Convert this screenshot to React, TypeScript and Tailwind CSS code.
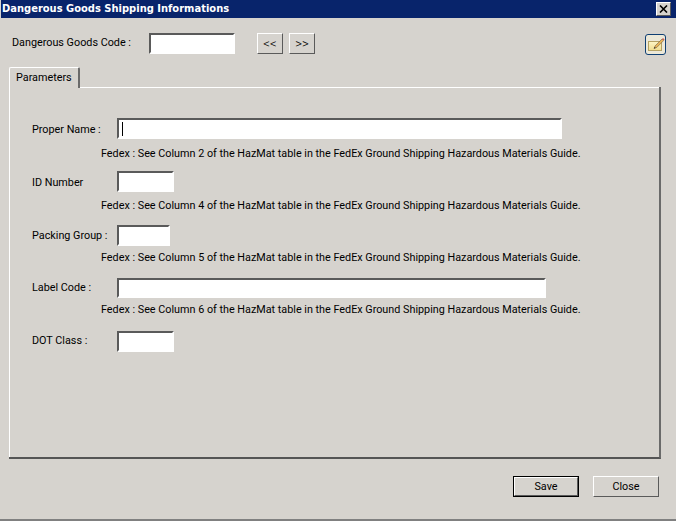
const inset = "bg-white border-2 border-t-[#5a5a5a] border-l-[#5a5a5a] border-r-white border-b-white";
const raised = "flex items-center justify-center bg-[#d6d3ce] border border-t-white border-l-white border-r-[#5a5a5a] border-b-[#5a5a5a]";

const Field = ({ label, labelPad, width, hint, hintGap, height, cursor }: { label: string; labelPad?: string; width: string; hint?: number; hintGap?: string; height?: string; cursor?: boolean }) => (
  <div>
    <div className="flex items-center">
      <span className={`w-[85px] whitespace-nowrap ${labelPad ?? "pt-px"}`}>{label}</span>
      <div className={`${inset} ${height ?? "h-[21px]"} ${width} flex items-center pl-[2px]`}>
        {cursor && <div className="ml-px w-px h-[14px] bg-black" />}
      </div>
    </div>
    {hint && (
      <p className={`${hintGap ?? "mt-[7px]"} ml-[69px] h-[14px] leading-[16px] whitespace-nowrap`}>
        Fedex : See Column {hint} of the HazMat table in the FedEx Ground Shipping Hazardous Materials Guide.
      </p>
    )}
  </div>
);

const App = () => {
  return (
    <div
      className="w-[676px] h-[521px] overflow-hidden flex flex-col bg-[#d6d3ce] text-[10.8px] text-black border-b-2 border-b-[#808080]"
      style={{ fontFamily: 'Roboto, sans-serif' }}
    >
      {/* Title bar */}
      <div className="ml-px h-[18px] shrink-0 bg-[#08246b] flex items-center justify-between pl-px pr-[5px]">
        <span className="text-white font-bold text-[9.95px] whitespace-nowrap" style={{ fontFamily: '"DejaVu Sans", sans-serif' }}>
          Dangerous Goods Shipping Informations
        </span>
        <button className={`${raised} w-[15px] h-[14px]`}>
          <svg width="9" height="8" viewBox="0 0 9 8">
            <path d="M1 0.5 L8 7.5 M8 0.5 L1 7.5" stroke="#000" strokeWidth="1.6" />
          </svg>
        </button>
      </div>

      {/* Code row */}
      <div className="flex items-center mt-[14px] pl-[12px] pr-[10px]">
        <span className="w-[137px] whitespace-nowrap">Dangerous Goods Code :</span>
        <div className={`${inset} h-[21px] w-[86px]`} />
        <button className={`${raised} ml-[22px] w-[26px] h-[21px] text-[13px] font-light`}>&lt;&lt;</button>
        <button className={`${raised} ml-[6px] w-[26px] h-[21px] text-[13px] font-light`}>&gt;&gt;</button>
        <button className="ml-auto mt-[2px] w-[21px] h-[21px] rounded-[3px] border border-[#0f3f73] bg-[#ece8d8]">
          <svg width="19" height="19" viewBox="0 0 19 19">
            <defs>
              <linearGradient id="folder" x1="0" y1="0" x2="0" y2="1">
                <stop offset="0" stopColor="#fdf6c8" />
                <stop offset="1" stopColor="#efdc8e" />
              </linearGradient>
            </defs>
            <rect x="2.5" y="6.5" width="13" height="9" fill="url(#folder)" stroke="#b5a264" />
            <path d="M8 13.5 L9.2 10.8 L16 4 L17.6 5.6 L10.8 12.4 Z" fill="#e8b458" stroke="#6f6248" strokeWidth="0.6" />
            <path d="M16 4 L17 3 L18.6 4.6 L17.6 5.6 Z" fill="#cf5f58" />
            <path d="M8 13.5 L8.6 11.9 L9.7 13 Z" fill="#222" />
          </svg>
        </button>
      </div>

      {/* Tabs */}
      <div className="mt-[12px] mx-[9px] flex flex-col">
        <div className="h-[21px] w-[71px] relative z-10 rounded-t-[2px] bg-[#d6d3ce] border-t border-l border-t-white border-l-white border-r-2 border-r-[#6a6a6a] flex items-center pl-[6px]">
          Parameters
        </div>
        <div className="-mt-px h-[372px] w-[652px] border-2 border-t-0 border-l-0 border-r-[#6a6a6a] border-b-[#555555]">
          <div className="h-full border-t border-l border-t-white border-l-white pt-[30px] pl-[22px] flex flex-col">
            <Field label="Proper Name :" labelPad="pt-[3px]" width="w-[445px]" hint={2} hintGap="mt-[7px]" cursor />
            <div className="mt-[11px]"><Field label="ID Number" labelPad="pt-[3px]" width="w-[57px]" hint={4} hintGap="mt-[6px]" /></div>
            <div className="mt-[13px]"><Field label="Packing Group :" width="w-[53px]" hint={5} hintGap="mt-[4px]" /></div>
            <div className="mt-[14px]"><Field label="Label Code :" width="w-[429px]" height="h-[20px]" hint={6} hintGap="mt-[4px]" /></div>
            <div className="mt-[15px]"><Field label="DOT Class :" labelPad="pb-px" width="w-[57px]" /></div>
          </div>
        </div>
      </div>

      {/* Footer */}
      <div className="mt-[17px] flex justify-end gap-[14px] pr-[17px]">
        <button className="w-[66px] h-[21px] border border-black">
          <span className={`${raised} w-full h-full pt-px`}>Save</span>
        </button>
        <button className={`${raised} w-[66px] h-[21px] pt-px`}>Close</button>
      </div>
    </div>
  );
};

export default App;
